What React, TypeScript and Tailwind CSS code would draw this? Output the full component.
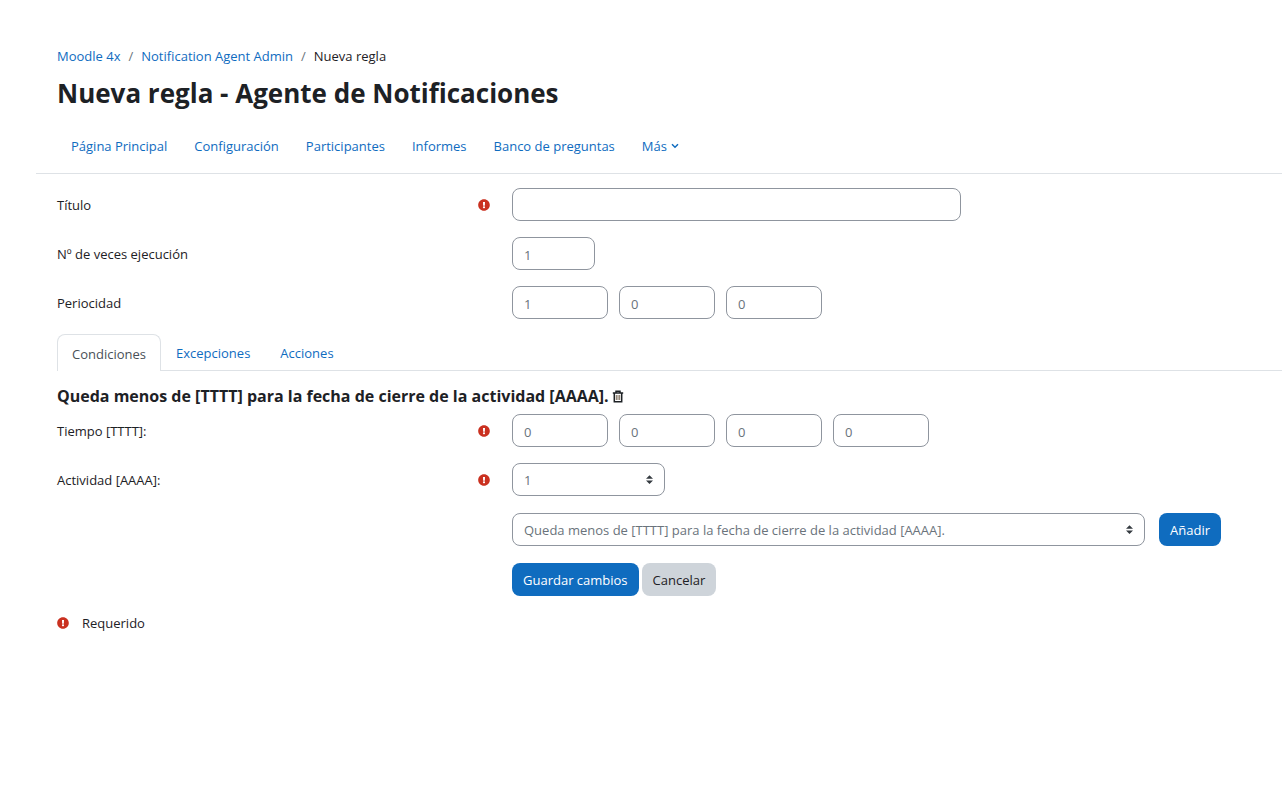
import type { ReactNode, SelectHTMLAttributes } from 'react';
import { FaExclamationCircle } from 'react-icons/fa';

const field = 'h-[33px] rounded-lg border border-[#8f959e] bg-white px-[11px] text-[13px] text-[#6a737b]';
const primaryButton = 'h-[33px] rounded-lg bg-[#0f6cbf] px-[11px] text-[13px] text-white';

const navLinks = ['Página Principal', 'Configuración', 'Participantes', 'Informes', 'Banco de preguntas'];

function RequiredIcon() {
  return <FaExclamationCircle className="size-3 shrink-0 text-[#ca3120]" aria-label="Requerido" role="img" />;
}

function TrashIcon() {
  return (
    <svg viewBox="0 0 12 13" className="h-[13px] w-3 fill-none stroke-current" aria-hidden="true">
      <path d="M0.8 3h10.4M4 2.7V1.2h4v1.5" strokeWidth="1.5" />
      <path d="M2.3 3v8.7h7.4V3" strokeWidth="1.5" />
      <path d="M4.3 5v5M6 5v5M7.7 5v5" strokeWidth="0.9" className="stroke-[#6b5a45]" />
    </svg>
  );
}

function Row({
  label,
  htmlFor,
  required,
  children,
}: {
  label?: string;
  htmlFor?: string;
  required?: boolean;
  children: ReactNode;
}) {
  return (
    <div className="grid grid-cols-[455fr_770fr] items-center">
      <div className="flex items-center justify-between pr-[22px]">
        {label && <label htmlFor={htmlFor}>{label}</label>}
        {required && <RequiredIcon />}
      </div>
      <div className="flex min-w-0 items-center">{children}</div>
    </div>
  );
}

function NumberBoxes({ id, values, names }: { id: string; values: string[]; names: string[] }) {
  return (
    <div className="flex gap-[11px]">
      {values.map((value, i) => (
        <input
          key={names[i]}
          id={i === 0 ? id : `${id}-${i}`}
          aria-label={names[i]}
          type="text"
          defaultValue={value}
          className={`${field} w-24 pt-[2px]`}
        />
      ))}
    </div>
  );
}

function Select({ width, children, ...props }: { width: string } & SelectHTMLAttributes<HTMLSelectElement>) {
  return (
    <div className={`relative ${width}`}>
      <select {...props} className={`${field} w-full appearance-none pr-8`}>
        {children}
      </select>
      <svg
        viewBox="0 0 4 5"
        className="pointer-events-none absolute top-3 right-3 h-[9px] w-[7px] fill-[#343a40]"
        aria-hidden="true"
      >
        <path d="M2 0L0 2h4zm0 5L0 3h4z" />
      </svg>
    </div>
  );
}

export default function App() {
  return (
    <main className="min-h-screen bg-white pt-[46px] font-['Open_Sans','Noto_Sans',sans-serif] text-[13px] leading-5 text-[#1d2125]">
      <header className="ml-9 border-b border-[#dee2e6] pl-[21px]">
        <nav aria-label="Ruta" className="flex gap-2">
          <a href="#moodle" className="text-[#0f6cbf]">Moodle 4x</a>
          <span className="text-[#6a737b]">/</span>
          <a href="#agent" className="text-[#0f6cbf]">Notification Agent Admin</a>
          <span className="text-[#6a737b]">/</span>
          <span>Nueva regla</span>
        </nav>
        <h1 className="mt-[7px] text-[26px] leading-10 font-bold">Nueva regla - Agente de Notificaciones</h1>
        <nav aria-label="Secundaria" className="mt-[6px] flex h-[54px] items-center gap-[27px] pl-[14px]">
          {navLinks.map((link) => (
            <a key={link} href="#nav" className="text-[#0f6cbf]">{link}</a>
          ))}
          <a href="#mas" className="flex items-center gap-1 text-[#0f6cbf]">
            Más
            <svg viewBox="0 0 8 6" className="h-[6px] w-2 fill-none stroke-current" aria-hidden="true">
              <path d="M1 1.2l3 3 3-3" strokeWidth="1.5" />
            </svg>
          </a>
        </nav>
      </header>

      <form className="pt-[14px] pl-[57px]" onSubmit={(e) => e.preventDefault()}>
        <div className="flex flex-col gap-4">
          <Row label="Título" htmlFor="titulo" required>
            <input id="titulo" type="text" className={`${field} w-[449px]`} />
          </Row>
          <Row label="Nº de veces ejecución" htmlFor="veces">
            <input id="veces" type="text" defaultValue="1" className={`${field} w-[83px] pt-[2px]`} />
          </Row>
          <Row label="Periocidad" htmlFor="periodo">
            <NumberBoxes id="periodo" values={['1', '0', '0']} names={['Días', 'Horas', 'Minutos']} />
          </Row>
        </div>

        <div role="tablist" className="mt-[15px] flex h-[37px] border-b border-[#dee2e6]">
          <button
            type="button"
            role="tab"
            aria-selected="true"
            className="-mb-px rounded-t-lg border border-b-0 border-[#dee2e6] bg-white px-[14px] pt-px text-[#495057]"
          >
            Condiciones
          </button>
          <button type="button" role="tab" aria-selected="false" className="px-[15px] pt-[2px] text-[#0f6cbf]">
            Excepciones
          </button>
          <button type="button" role="tab" aria-selected="false" className="px-[15px] pt-[2px] text-[#0f6cbf]">
            Acciones
          </button>
        </div>

        <h2 className="mt-[13px] flex items-center gap-[3px] text-base leading-6 font-bold">
          Queda menos de [TTTT] para la fecha de cierre de la actividad [AAAA].
          <button type="button" aria-label="Eliminar">
            <TrashIcon />
          </button>
        </h2>

        <div className="mt-[6px] flex flex-col gap-4">
          <Row label="Tiempo [TTTT]:" htmlFor="tiempo" required>
            <NumberBoxes
              id="tiempo"
              values={['0', '0', '0', '0']}
              names={['Días', 'Horas', 'Minutos', 'Segundos']}
            />
          </Row>
          <Row label="Actividad [AAAA]:" htmlFor="actividad" required>
            <Select id="actividad" width="w-[153px]">
              <option>1</option>
            </Select>
          </Row>
        </div>
        <div className="mt-[17px] flex flex-col gap-[17px]">
          <Row>
            <div className="flex w-full gap-[14px] pr-[61px]">
              <Select aria-label="Condición" width="min-w-0 flex-1">
                <option>Queda menos de [TTTT] para la fecha de cierre de la actividad [AAAA].</option>
              </Select>
              <button type="button" className={primaryButton}>Añadir</button>
            </div>
          </Row>
          <Row>
            <div className="flex gap-[3px]">
              <button type="submit" className={primaryButton}>Guardar cambios</button>
              <button type="button" className="h-[33px] rounded-lg bg-[#ced4da] px-[11px] text-[#1d2125]">
                Cancelar
              </button>
            </div>
          </Row>
        </div>

        <p className="mt-[17px] flex items-center gap-[13px]">
          <RequiredIcon />
          Requerido
        </p>
      </form>
    </main>
  );
}
